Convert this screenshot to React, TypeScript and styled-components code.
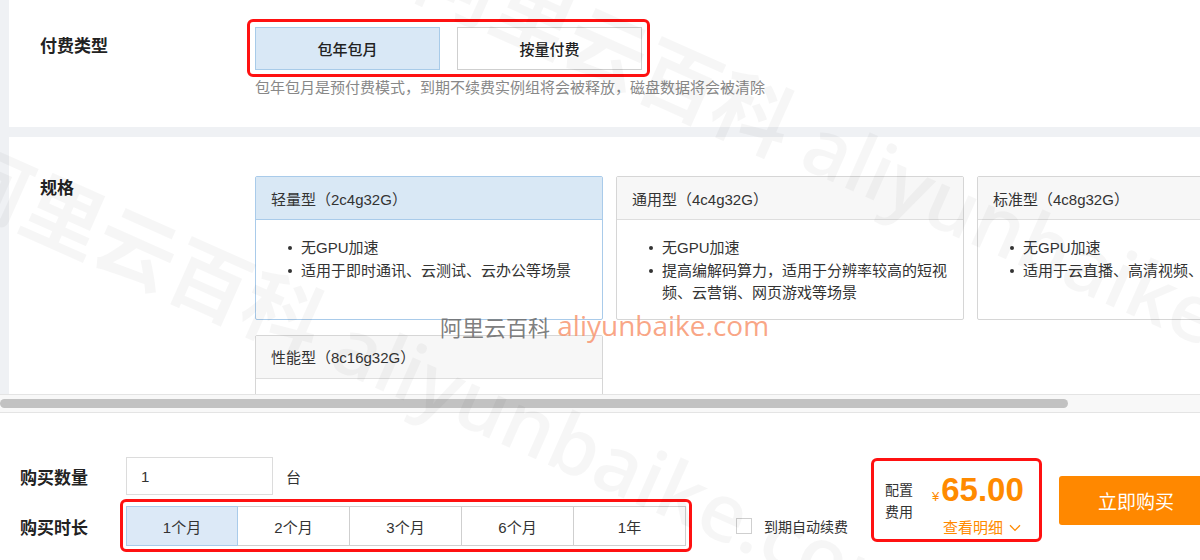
import React from 'react';
import styled, { createGlobalStyle } from 'styled-components';

const GlobalStyle = createGlobalStyle`
  html, body {
    margin: 0;
    padding: 0;
    background: #ffffff;
  }
  body {
    font-family: "Liberation Sans", "Noto Sans CJK SC", sans-serif;
    color: #333;
  }
`;

const specs = [
  { title: '轻量型（2c4g32G）', items: ['无GPU加速', '适用于即时通讯、云测试、云办公等场景'], active: true },
  { title: '通用型（4c4g32G）', items: ['无GPU加速', '提高编解码算力，适用于分辨率较高的短视频、云营销、网页游戏等场景'] },
  { title: '标准型（4c8g32G）', items: ['无GPU加速', '适用于云直播、高清视频、云游戏等场景'] },
  { title: '性能型（8c16g32G）', items: ['GPU加速'] },
];

const durations = ['1个月', '2个月', '3个月', '6个月', '1年'];

const App = () => {
  return (
    <Page>
      <GlobalStyle />
      <Upper>
        <TopPanel>
          <Label>付费类型</Label>
          <Field>
            <Marked>
              <TypeButton active>包年包月</TypeButton>
              <TypeButton>按量付费</TypeButton>
            </Marked>
            <Hint>包年包月是预付费模式，到期不续费实例组将会被释放，磁盘数据将会被清除</Hint>
          </Field>
        </TopPanel>
        <SpecPanel>
          <SpecLabel>规格</SpecLabel>
          <CardGrid>
            {specs.map((s) => (
              <Card key={s.title} active={s.active}>
                <CardHead active={s.active}>{s.title}</CardHead>
                <CardBody>
                  {s.items.map((t) => (
                    <Bullet key={t}>{t}</Bullet>
                  ))}
                </CardBody>
              </Card>
            ))}
          </CardGrid>
        </SpecPanel>
      </Upper>

      <ScrollTrack>
        <ScrollThumb />
      </ScrollTrack>

      <BottomBar>
        <Rows>
          <Row>
            <RowLabel>购买数量</RowLabel>
            <CountBox>1</CountBox>
            <Unit>台</Unit>
          </Row>
          <Row>
            <RowLabel>购买时长</RowLabel>
            <SegmentFrame>
              {durations.map((d, i) => (
                <Segment key={d} active={i === 0}>{d}</Segment>
              ))}
            </SegmentFrame>
            <Renew>
              <Check />
              到期自动续费
            </Renew>
          </Row>
        </Rows>
        <PriceBox>
          <PriceLabel>配置<br />费用</PriceLabel>
          <PriceCol>
            <Amount>
              <Yen>¥</Yen>65.00
            </Amount>
            <Detail>
              查看明细
              <svg width="12" height="8" viewBox="0 0 12 8" fill="none">
                <path d="M1 1.2L6 6.4L11 1.2" stroke="#ff8a00" strokeWidth="1.3" />
              </svg>
            </Detail>
          </PriceCol>
        </PriceBox>
        <BuyButton>立即购买</BuyButton>
      </BottomBar>

      <Watermarks>
        <BigMark style={{ left: 450, top: -90 }}>阿里云百科 aliyunbaike.com</BigMark>
        <BigMark style={{ left: -20, top: 110 }}>阿里云百科 aliyunbaike.com</BigMark>
        <CenterMark>
          <Gray>阿里云百科</Gray> aliyunbaike.com
        </CenterMark>
      </Watermarks>
    </Page>
  );
};

export default App;

const Page = styled.div`
  position: relative;
  width: 1200px;
  height: 560px;
  overflow: hidden;
  background: #fff;
`;

const Upper = styled.div`
  background: #eff1f4;
  padding-left: 9px;
  display: flex;
  flex-direction: column;
  gap: 10px;
`;

const TopPanel = styled.div`
  background: #fff;
  height: 127px;
  display: flex;
  align-items: flex-start;
  padding: 27px 0 0 31px;
  box-sizing: border-box;
`;

const Label = styled.div`
  width: 215px;
  flex-shrink: 0;
  font-size: 17px;
  font-weight: 600;
  line-height: 40px;
  color: #222;
`;

const Field = styled.div`
  display: flex;
  flex-direction: column;
  align-items: flex-start;
`;

const Marked = styled.div`
  display: flex;
  gap: 17px;
  border: 3px solid #f11;
  border-radius: 6px;
  padding: 5px 5px 4px 5px;
  margin: -8px 0 -7px -8px;
`;

const TypeButton = styled.div<{ active?: boolean }>`
  width: 185px;
  height: 43px;
  box-sizing: border-box;
  display: flex;
  align-items: center;
  justify-content: center;
  font-size: 15px;
  font-weight: 500;
  color: #222;
  background: ${(p) => (p.active ? '#d9e8f6' : '#fff')};
  border: 1px solid ${(p) => (p.active ? '#a8cbe9' : '#cfcfcf')};
`;

const Hint = styled.div`
  margin-top: 8px;
  font-size: 15px;
  line-height: 20px;
  color: #888;
`;

const SpecPanel = styled.div`
  background: #fff;
  height: 257px;
  overflow: hidden;
  display: flex;
  align-items: flex-start;
  padding: 39px 0 0 31px;
  box-sizing: border-box;
`;

const SpecLabel = styled(Label)`
  line-height: 24px;
  margin-top: 1px;
`;

const CardGrid = styled.div`
  display: grid;
  grid-template-columns: repeat(3, 348px);
  column-gap: 13px;
  row-gap: 15px;
  flex-shrink: 0;
`;

const Card = styled.div<{ active?: boolean }>`
  border: 1px solid ${(p) => (p.active ? '#a9cbea' : '#d6d6d6')};
  border-radius: 2px;
  background: #fff;
  display: flex;
  flex-direction: column;
`;

const CardHead = styled.div<{ active?: boolean }>`
  height: 42px;
  display: flex;
  align-items: center;
  padding-left: 15px;
  font-size: 15px;
  color: #333;
  background: ${(p) => (p.active ? '#d9e8f5' : '#f7f7f7')};
  border-bottom: 1px solid ${(p) => (p.active ? '#a9cbea' : '#dedede')};
`;

const CardBody = styled.ul`
  list-style: none;
  margin: 0;
  padding: 17px 16px 14px 45px;
  flex: 1;
`;

const Bullet = styled.li`
  position: relative;
  font-size: 15px;
  line-height: 22.5px;
  color: #333;

  &::before {
    content: '';
    position: absolute;
    left: -13px;
    top: 9px;
    width: 4px;
    height: 4px;
    border-radius: 50%;
    background: #333;
  }
`;

const ScrollTrack = styled.div`
  height: 19px;
  box-sizing: border-box;
  background: #f8f8f8;
  border-top: 1px solid #e4e4e4;
  border-bottom: 1px solid #e4e4e4;
  display: flex;
  align-items: center;
`;

const ScrollThumb = styled.div`
  width: 1068px;
  height: 9px;
  border-radius: 5px;
  background: #c2c2c2;
`;

const BottomBar = styled.div`
  height: 147px;
  box-sizing: border-box;
  display: flex;
  align-items: flex-start;
  padding: 44px 0 0 20px;
`;

const Rows = styled.div`
  display: flex;
  flex-direction: column;
  gap: 11px;
  flex-shrink: 0;
`;

const Row = styled.div`
  display: flex;
  align-items: center;
`;

const RowLabel = styled.div`
  width: 106px;
  font-size: 17px;
  font-weight: 600;
  color: #222;
`;

const CountBox = styled.div`
  width: 147px;
  height: 38px;
  box-sizing: border-box;
  border: 1px solid #dcdcdc;
  padding-left: 14px;
  display: flex;
  align-items: center;
  font-size: 15px;
  color: #333;
`;

const Unit = styled.span`
  margin-left: 13px;
  font-size: 15px;
  color: #333;
`;

const SegmentFrame = styled.div`
  display: flex;
  border: 3px solid #f11;
  border-radius: 6px;
  padding: 4px 3px 3px 3px;
  margin: -7px -6px -6px -6px;
`;

const Segment = styled.div<{ active?: boolean }>`
  width: 112px;
  height: 40px;
  box-sizing: border-box;
  display: flex;
  align-items: center;
  justify-content: center;
  font-size: 15px;
  color: #333;
  background: ${(p) => (p.active ? '#dce9f7' : '#fff')};
  border: 1px solid ${(p) => (p.active ? '#a9cbea' : '#cfcfcf')};
  & + & {
    border-left: none;
  }
`;

const Renew = styled.label`
  display: flex;
  align-items: center;
  gap: 12px;
  margin-left: 50px;
  font-size: 14px;
  color: #333;
  white-space: nowrap;
`;

const Check = styled.span`
  width: 16px;
  height: 16px;
  box-sizing: border-box;
  border: 1px solid #cfcfcf;
  background: #fff;
`;

const PriceBox = styled.div`
  width: 171px;
  height: 84px;
  box-sizing: border-box;
  border: 3px solid #f11;
  border-radius: 6px;
  margin: 1px 0 0 23px;
  flex-shrink: 0;
  display: flex;
  align-items: center;
  padding: 0 0 0 11px;
`;

const PriceLabel = styled.div`
  font-size: 14px;
  line-height: 22px;
  color: #333;
  margin-top: 2px;
`;

const PriceCol = styled.div`
  align-self: flex-start;
  display: flex;
  flex-direction: column;
  align-items: center;
  margin: 14px 0 0 19px;
`;

const Amount = styled.div`
  font-size: 33px;
  font-weight: 700;
  color: #ff8a00;
  line-height: 30px;
  display: flex;
  align-items: baseline;
`;

const Yen = styled.span`
  font-size: 13px;
  font-weight: 400;
  margin-right: 2px;
`;

const Detail = styled.div`
  display: flex;
  align-items: center;
  gap: 6px;
  margin-top: 6px;
  margin-left: 8px;
  font-size: 15px;
  line-height: 20px;
  color: #ff8a00;
`;

const BuyButton = styled.div`
  width: 154px;
  height: 49px;
  flex-shrink: 0;
  margin: 19px 0 0 17px;
  border-radius: 3px;
  background: #ff8800;
  color: #fff;
  font-size: 19px;
  display: flex;
  align-items: center;
  justify-content: center;
`;

const Watermarks = styled.div`
  position: absolute;
  inset: 0;
  pointer-events: none;
  overflow: hidden;
`;

const BigMark = styled.div`
  position: absolute;
  white-space: nowrap;
  font-family: "Open Sans", "Noto Sans CJK SC", sans-serif;
  font-size: 80px;
  font-weight: 600;
  color: rgba(0, 0, 0, 0.035);
  transform: rotate(24deg);
  transform-origin: 0 0;
`;

const CenterMark = styled.div`
  position: absolute;
  left: 440px;
  top: 308px;
  white-space: nowrap;
  font-family: "Open Sans", "Noto Sans CJK SC", sans-serif;
  font-size: 28px;
  line-height: 34px;
  color: rgba(248, 150, 112, 0.85);
`;

const Gray = styled.span`
  font-size: 22px;
  color: rgba(110, 110, 110, 0.9);
`;
